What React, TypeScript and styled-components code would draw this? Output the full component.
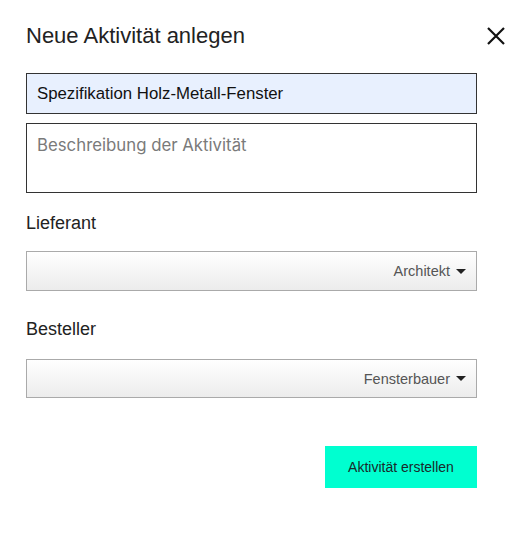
import React from "react";
import styled, { createGlobalStyle } from "styled-components";

const Global = createGlobalStyle`
  html, body { margin: 0; padding: 0; background: #fff; }
  body { font-family: "Liberation Sans", Arial, sans-serif; color: #222; }
  * { box-sizing: border-box; }
`;

const Dialog = styled.div`
  width: 531px;
  height: 540px;
  padding: 23px 26px 0 26px;
  display: flex;
  flex-direction: column;
`;

const Header = styled.div`
  display: flex;
  align-items: center;
  justify-content: space-between;
  height: 26px;
`;

const Title = styled.h1`
  margin: 0;
  font-size: 22px;
  font-weight: 400;
  line-height: 26px;
  color: #222;
`;

const CloseButton = styled.button`
  border: 0;
  background: none;
  padding: 0;
  width: 18px;
  height: 18px;
  display: flex;
  cursor: pointer;
`;

const Form = styled.form`
  width: 451px;
  display: flex;
  flex-direction: column;
  margin-top: 24px;
`;

const TextInput = styled.input`
  height: 41px;
  width: 100%;
  border: 1px solid #333;
  background: #e8f0fe;
  padding: 0 10px;
  font-family: "Liberation Sans", Arial, sans-serif;
  font-size: 16.8px;
  color: #111;
  outline: none;
`;

const TextArea = styled.textarea`
  margin-top: 9px;
  height: 70px;
  width: 100%;
  border: 1px solid #333;
  background: #fff;
  padding: 11px 10px;
  resize: none;
  font-family: Inter, "Liberation Sans", sans-serif;
  font-size: 16.8px;
  line-height: 20px;
  outline: none;
  &::placeholder { color: #7a7a7a; }
`;

const Label = styled.label<{ $top: number }>`
  margin-top: ${(p) => p.$top}px;
  font-size: 18px;
  line-height: 20px;
  color: #222;
`;

const Select = styled.div<{ $h: number; $top: number }>`
  margin-top: ${(p) => p.$top}px;
  height: ${(p) => p.$h}px;
  border: 1px solid #aaa;
  background: linear-gradient(#ffffff, #ececec);
  display: flex;
  align-items: center;
  justify-content: flex-end;
  padding-right: 10px;
  gap: 6px;
  font-size: 14.5px;
  color: #555;
`;

const Caret = styled.span`
  width: 0;
  height: 0;
  border-left: 5px solid transparent;
  border-right: 5px solid transparent;
  border-top: 5px solid #222;
`;

const Actions = styled.div`
  display: flex;
  justify-content: flex-end;
  margin-top: 48px;
`;

const Submit = styled.button`
  width: 152px;
  height: 42px;
  border: 0;
  background: #00ffd0;
  font-family: "Liberation Sans", Arial, sans-serif;
  font-size: 14px;
  color: #1a2a2a;
  cursor: pointer;
`;

export default function App() {
  return (
    <>
      <Global />
      <Dialog>
        <Header>
          <Title>Neue Aktivität anlegen</Title>
          <CloseButton aria-label="Schließen">
            <svg width="18" height="18" viewBox="0 0 18 18">
              <path d="M1 1 L17 17 M17 1 L1 17" stroke="#111" strokeWidth="2.2" />
            </svg>
          </CloseButton>
        </Header>
        <Form>
          <TextInput defaultValue="Spezifikation Holz-Metall-Fenster" />
          <TextArea placeholder="Beschreibung der Aktivität" />
          <Label $top={20}>Lieferant</Label>
          <Select $h={40} $top={18}>
            Architekt <Caret />
          </Select>
          <Label $top={28}>Besteller</Label>
          <Select $h={39} $top={20}>
            Fensterbauer <Caret />
          </Select>
          <Actions>
            <Submit type="button">Aktivität erstellen</Submit>
          </Actions>
        </Form>
      </Dialog>
    </>
  );
}
